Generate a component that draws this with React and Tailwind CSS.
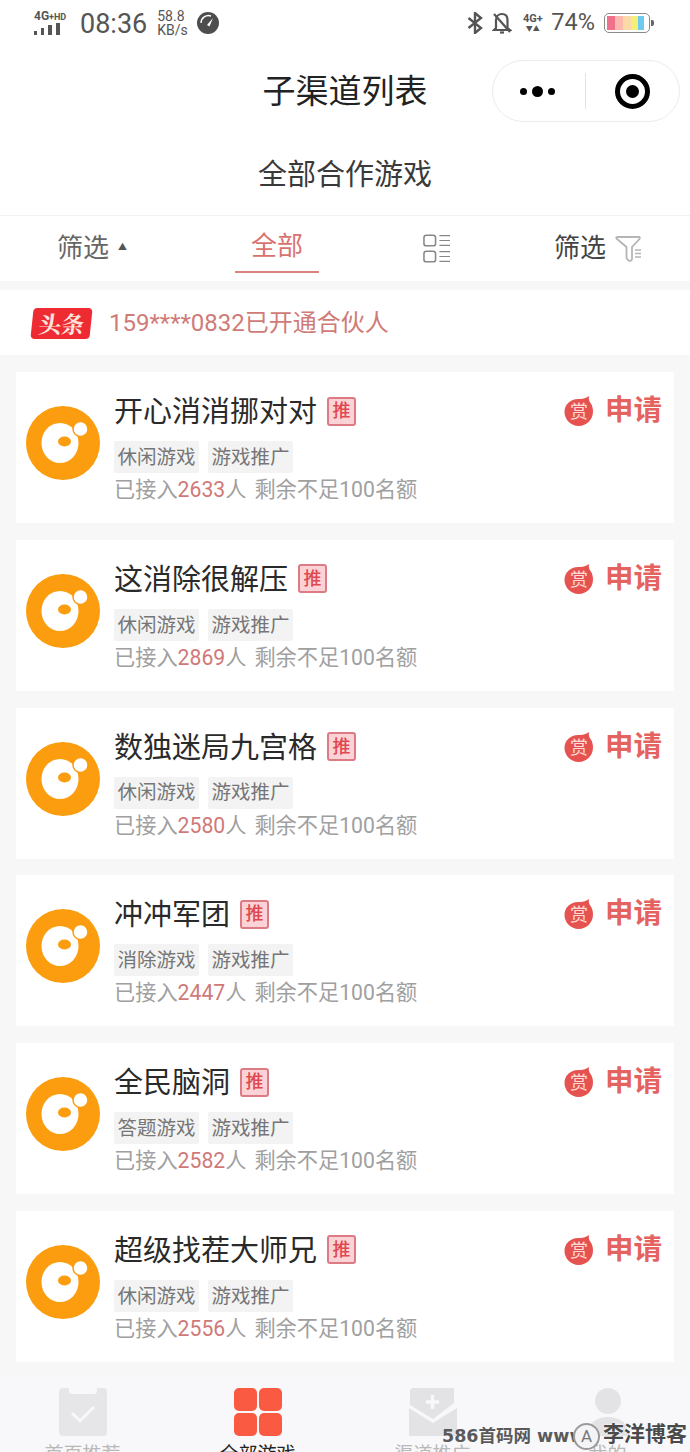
import React from "react";

const FONT = "font-['Roboto','Noto_Sans_CJK_SC',sans-serif]";

const games = [
  { name: "开心消消挪对对", genre: "休闲游戏", count: 2633 },
  { name: "这消除很解压", genre: "休闲游戏", count: 2869 },
  { name: "数独迷局九宫格", genre: "休闲游戏", count: 2580 },
  { name: "冲冲军团", genre: "消除游戏", count: 2447 },
  { name: "全民脑洞", genre: "答题游戏", count: 2582 },
  { name: "超级找茬大师兄", genre: "休闲游戏", count: 2556 },
];

const GameLogo = () => (
  <svg viewBox="0 0 74 74" className="h-[74px] w-[74px] shrink-0">
    <circle cx="37" cy="37" r="37" fill="#fb9d0e" />
    <ellipse cx="34" cy="37" rx="18.500" ry="20" fill="#ffffff" />
    <circle cx="54.500" cy="23" r="7.500" fill="#ffffff" stroke="#fb9d0e" strokeWidth="1.500" />
    <ellipse cx="38.500" cy="35.500" rx="6.500" ry="5" fill="#fb9d0e" />
  </svg>
);

const RewardIcon = () => (
  <div className="relative h-[30px] w-[30px] shrink-0">
    <svg viewBox="0 0 30 30" className="absolute inset-0 h-full w-full">
      <path d="M14 3 C18 3 22 2.500 25 0 C24.500 3 25 5 26.500 7 C28.200 9.300 29 12 29 15.500 C29 23.500 22.700 30 14.700 30 C6.700 30 0.500 23.500 0.500 16 C0.500 8.500 6.500 3 14 3 Z" fill="#e5524f" />
    </svg>
    <span className="absolute inset-0 flex items-center justify-center pt-[2px] text-[18px] leading-none text-[#ffd9d4]">赏</span>
  </div>
);

const GameCard = ({ game }) => (
  <div className="flex h-[151px] items-start bg-white pl-[10px] pr-[12px]">
    <div className="mt-[34px]">
      <GameLogo />
    </div>
    <div className="ml-[14px] flex-1 pt-[23px]">
      <div className="flex h-[34px] items-center">
        <span className="text-[29px] leading-[34px] text-[#2a2a2a]">{game.name}</span>
        <span className="mb-[2px] ml-[10px] flex h-[29px] w-[29px] items-center justify-center rounded-[3px] border-2 border-[#dd7b84] bg-[#fbd3d6] text-[18px] font-medium leading-none text-[#e0484f]">
          推
        </span>
      </div>
      <div className="mt-[12px] flex gap-[9px]">
        {[game.genre, "游戏推广"].map((tag) => (
          <span key={tag} className="flex h-[32px] w-[85px] items-center justify-center rounded-[2px] bg-[#f3f3f3] pt-[1px] text-[19.500px] leading-none text-[#767676]">
            {tag}
          </span>
        ))}
      </div>
      <div className="mt-[2px] whitespace-nowrap text-[21.200px] leading-[30px] text-[#a0a0a0]">
        已接入<span className="text-[#cf7a78]">{game.count}</span>人<span className="ml-[8px]">剩余不足100名额</span>
      </div>
    </div>
    <div className="mt-[24px] flex items-center">
      <RewardIcon />
      <span className="ml-[11px] text-[28.500px] font-bold leading-[30px] text-[#e5635f]">申请</span>
    </div>
  </div>
);

const StatusBar = () => (
  <div className="flex h-[46px] items-center justify-between pl-[34px] pr-[36px] text-[#555555]">
    <div className="flex items-center">
      <div className="w-[37px]">
        <div className="whitespace-nowrap text-[12px] font-bold leading-[10px]">
          4G<span className="text-[9px]">+HD</span>
        </div>
        <div className="mt-[1px] flex h-[12px] items-end gap-[4px]">
          <span className="h-[4px] w-[3px] bg-[#555555]" />
          <span className="h-[7px] w-[3px] bg-[#555555]" />
          <span className="h-[10px] w-[4px] bg-[#555555]" />
          <span className="h-[12px] w-[4px] bg-[#555555]" />
        </div>
      </div>
      <span className="ml-[9px] pt-[2px] text-[27px] leading-none">08:36</span>
      <div className="ml-[10px] text-[14px] leading-[14px]">
        <div>58.8</div>
        <div>KB/s</div>
      </div>
      <svg viewBox="0 0 22 22" className="ml-[9px] h-[22px] w-[22px]">
        <circle cx="11" cy="11" r="11" fill="#4d4d4d" />
        <path d="M10 13 L16 6 L12.500 14.500 Z" fill="#ffffff" />
        <path d="M4 11 A7.500 7.500 0 0 1 14 4" fill="none" stroke="#ffffff" strokeWidth="1.400" />
      </svg>
    </div>
    <div className="flex items-center">
      <svg viewBox="0 0 16 22" className="h-[22px] w-[16px]" fill="none" stroke="#555555" strokeWidth="2.400">
        <path d="M1.500 6 L14 16 L8 21 V1 L14 6 L1.500 16" />
      </svg>
      <svg viewBox="0 0 20 22" className="ml-[9px] h-[22px] w-[20px]" fill="none" stroke="#555555" strokeWidth="2.200">
        <path d="M4 16 V8 C4 4.500 6.500 2 10 2 C13.500 2 15.500 4.500 15.500 8 V16 L18 18 H2 Z" />
        <path d="M8 20.500 H12" />
        <path d="M2 2 L18 20" />
      </svg>
      <div className="ml-[8px] w-[25px] text-center">
        <div className="text-[11px] font-bold leading-[12px]">4G+</div>
        <div className="text-[7px] leading-[8px]">▼▲</div>
      </div>
      <span className="ml-[6px] text-[23.500px] leading-none">74%</span>
      <div className="ml-[9px] flex h-[20px] w-[46px] overflow-hidden rounded-[5px] border border-[#8a8a8a] p-[2px]">
        <span className="w-[8px] bg-[#f0728a]" />
        <span className="w-[8px] bg-[#fcb9ae]" />
        <span className="w-[8px] bg-[#fbd9a8]" />
        <span className="w-[7px] bg-[#f6ee7a]" />
        <span className="w-[6px] bg-[#6ecbf0]" />
      </div>
      <span className="ml-[1px] h-[6px] w-[3px] rounded-r-[2px] bg-[#666666]" />
    </div>
  </div>
);

const NavBar = () => (
  <div className="relative flex h-[90px] items-center justify-center">
    <span className="text-[33px] leading-none text-[#222222]">子渠道列表</span>
    <div className="absolute right-[10px] top-[14px] flex h-[62px] w-[188px] items-center rounded-full border border-[#ececec] bg-white">
      <div className="flex w-[92px] items-center justify-center gap-[5px] pr-[3px]">
        <span className="h-[7px] w-[7px] rounded-full bg-black" />
        <span className="h-[11px] w-[11px] rounded-full bg-black" />
        <span className="h-[7px] w-[7px] rounded-full bg-black" />
      </div>
      <span className="h-[36px] w-px bg-[#e3e3e3]" />
      <div className="flex flex-1 items-center justify-center">
        <span className="flex h-[35px] w-[35px] items-center justify-center rounded-full border-[5px] border-black">
          <span className="h-[13px] w-[13px] rounded-full bg-black" />
        </span>
      </div>
    </div>
  </div>
);

const FilterBar = () => (
  <div className="flex h-[66px] items-center border-t border-[#f3f3f3] bg-white">
    <div className="flex w-[235px] items-center pb-[2px] pl-[57px]">
      <span className="text-[26px] leading-none text-[#666666]">筛选</span>
      <span className="ml-[9px] text-[9px] leading-none text-[#555555]">▲</span>
    </div>
    <div className="flex h-full w-[84px] flex-col items-center justify-end">
      <span className="text-[26px] leading-none text-[#d9726e]">全部</span>
      <span className="mt-[12px] h-[2px] w-full bg-[#d9827e]" />
      <span className="h-[8px]" />
    </div>
    <div className="ml-[104px] flex h-[29px] w-[28px] flex-col justify-between">
      {[0, 1].map((i) => (
        <svg key={i} viewBox="0 0 29 13" className="h-[13px] w-[28px]" fill="none" stroke="#888888">
          <rect x="1" y="1" width="12" height="11" rx="2.500" strokeWidth="1.600" />
          <path d="M17 1.500 H28 M17 6.500 H28 M17 11.500 H28" strokeWidth="1.200" />
        </svg>
      ))}
    </div>
    <span className="ml-[103px] pb-[2px] text-[26px] leading-none text-[#444444]">筛选</span>
    <svg viewBox="0 0 28 28" className="ml-[9px] h-[28px] w-[28px]" fill="none" stroke="#b5b5b5">
      <path d="M2 2 H24 C25 2 25 3 24.500 4 L17 12 V24 C17 26 14 26.500 13 25 L11.500 23 V12 L2 4 C1 3 1 2 2 2 Z" strokeWidth="1.800" />
      <path d="M20 15 H26 M20 18.500 H26 M20 22 H26" strokeWidth="1.400" />
    </svg>
  </div>
);

const TabBar = () => (
  <div className="relative mt-[16px] h-[74px] overflow-hidden bg-[#f8f8fa]">
    <div className="-ml-[5px] grid w-[700px] grid-cols-4">
      <div className="flex flex-col items-center pt-[10px]">
        <svg viewBox="0 0 48 48" className="h-[48px] w-[48px] shrink-0">
          <rect width="48" height="48" rx="4" fill="#e6e6e8" />
          <path d="M10 0 V3 C10 5 11 6 13 6 H35 C37 6 38 5 38 3 V0 Z" fill="#f8f8fa" />
          <path d="M13 25 L21 33 L35 19" fill="none" stroke="#f8f8fa" strokeWidth="3" />
        </svg>
        <span className="mt-[9px] text-[19px] leading-none text-[#b8b8b8]">首页推荐</span>
      </div>
      <div className="flex flex-col items-center pt-[10px]">
        <div className="grid h-[48px] w-[48px] shrink-0 grid-cols-2 gap-[2px]">
          {[0, 1, 2, 3].map((i) => (
            <span key={i} className="rounded-[5px] bg-[#fb5a42]" />
          ))}
        </div>
        <span className="mt-[9px] text-[19px] leading-none text-[#222222]">全部游戏</span>
      </div>
      <div className="flex flex-col items-center pt-[10px]">
        <svg viewBox="0 0 48 48" className="h-[48px] w-[48px] shrink-0">
          <path d="M3 0 H45 V15 L24 31 L1 17 V2 Z" fill="#e3e3e5" />
          <path d="M0 20 L24 35 L48 20 V48 H0 Z" fill="#e3e3e5" />
          <path d="M23.500 7 V21 M17 14 H30" stroke="#f8f8fa" strokeWidth="3.500" />
        </svg>
        <span className="mt-[9px] whitespace-nowrap text-[19px] leading-none text-[#b8b8b8]">渠道推广</span>
      </div>
      <div className="flex flex-col items-center pt-[10px]">
        <svg viewBox="0 0 48 48" className="h-[48px] w-[48px] shrink-0">
          <circle cx="24" cy="13" r="13" fill="#e3e3e5" />
          <path d="M3 48 C3 36 12 29 24 29 C36 29 45 36 45 48 Z" fill="#e3e3e5" />
        </svg>
        <span className="mt-[9px] text-[19px] leading-none text-[#b8b8b8]">我的</span>
      </div>
    </div>
    <div className="absolute bottom-[5px] left-[442px] whitespace-nowrap font-['DejaVu_Sans','Noto_Sans_CJK_SC',sans-serif] text-[17.500px] font-bold leading-[22px] text-[#5a5a5a]">
      586首码网 www
    </div>
    <div className="absolute bottom-[2px] left-[573px] flex h-[27px] w-[27px] items-center justify-center rounded-full border-2 border-[#9a9a9a] bg-[#f4f4f6] text-[17px] leading-none text-[#777777]">
      A
    </div>
    <div className="absolute bottom-[6px] left-[603px] whitespace-nowrap text-[21px] font-bold leading-[24px] text-[#4a4a4a] [text-shadow:0_0_2px_#ffffff,0_0_2px_#ffffff]">
      李洋博客
    </div>
  </div>
);

export default function App() {
  return (
    <div className={`h-[1452px] w-[690px] overflow-hidden bg-[#f7f7f7] ${FONT}`}>
      <div className="bg-white">
        <StatusBar />
        <NavBar />
        <div className="flex h-[79px] items-center justify-center pb-[1px] text-[29px] leading-none text-[#3a3a3a]">
          全部合作游戏
        </div>
      </div>
      <FilterBar />
      <div className="mt-[9px] flex h-[65px] items-center bg-white pl-[32px] pt-[1px]">
        <span className="flex h-[31px] w-[59px] -skew-x-6 items-center justify-center rounded-[4px] bg-[#ee2b33] font-['Noto_Serif_CJK_SC','Noto_Sans_CJK_SC',serif] text-[23px] font-bold leading-none text-[#ffe4dc]">
          头条
        </span>
        <span className="ml-[18px] text-[24px] leading-none text-[#cf7b78]">159****0832已开通合伙人</span>
      </div>
      <div className="mt-[17px] flex flex-col gap-[16.800px] px-[16px]">
        {games.map((game) => (
          <GameCard key={game.name} game={game} />
        ))}
      </div>
      <TabBar />
    </div>
  );
}
